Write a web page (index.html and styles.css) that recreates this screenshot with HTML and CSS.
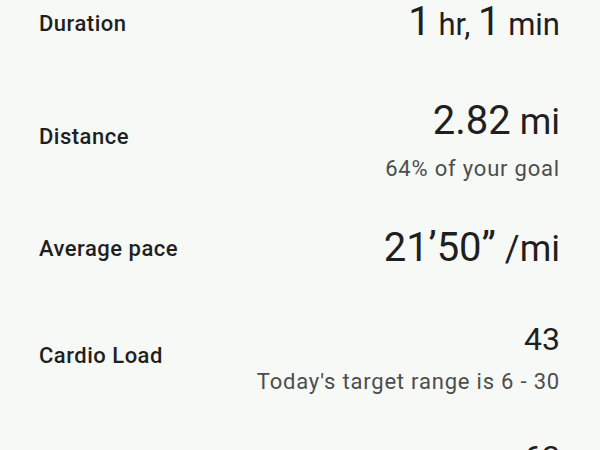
FILE: index.html
```html
<!DOCTYPE html>
<html lang="en">
<head>
  <meta charset="UTF-8">
  <meta name="viewport" content="width=device-width, initial-scale=1.0">
  <title>Workout summary</title>
  <link rel="stylesheet" href="styles.css">
</head>
<body>
  <div class="stats">
    <div class="stat-row">
      <div class="stat-label">Duration</div>
      <div class="stat-values">
        <div class="stat-value stat-value-time"><span class="num">1</span> hr, <span class="num">1</span> min</div>
      </div>
    </div>

    <div class="stat-row has-sub">
      <div class="stat-label">Distance</div>
      <div class="stat-values">
        <div class="stat-value"><span class="num">2.82</span> mi</div>
        <div class="stat-sub">64% of your goal</div>
      </div>
    </div>

    <div class="stat-row">
      <div class="stat-label">Average pace</div>
      <div class="stat-values">
        <div class="stat-value"><span class="num">21’50”</span> /mi</div>
      </div>
    </div>

    <div class="stat-row has-sub">
      <div class="stat-label">Cardio Load</div>
      <div class="stat-values">
        <div class="stat-value stat-value-sm">43</div>
        <div class="stat-sub">Today's target range is 6 - 30</div>
      </div>
    </div>

    <div class="stat-row has-sub">
      <div class="stat-label">Average heart rate</div>
      <div class="stat-values">
        <div class="stat-value stat-value-sm">62</div>
        <div class="stat-sub">bpm</div>
      </div>
    </div>
  </div>
</body>
</html>
```

FILE: styles.css
```css
:root {
  --bg-color: #f7f9f7;
  --text: #1f1f1f;
  --text-muted: #4b4e4c;
}
body {
  font-family: Roboto, 'Noto Sans', sans-serif;
  background-color: var(--bg-color);
  color: var(--text);
  margin: 0;
  overflow: hidden;
}
.stats {
  margin-top: -26px;
  padding: 0 40px 0 39px;
}
.stat-row {
  display: flex;
  justify-content: space-between;
  align-items: center;
  padding: 19px 0;
}
.stat-row:first-child {
  padding-top: 20px;
}
.stat-label {
  font-size: 22px;
  font-weight: 500;
  letter-spacing: 0.5px;
}
.stat-values {
  text-align: right;
}
.has-sub .stat-values {
  padding-top: 2px;
}
.stat-value {
  font-size: 36px;
  line-height: 56px;
  white-space: nowrap;
}
.stat-value .num {
  font-size: 40px;
}
.stat-value-time {
  font-size: 31px;
}
.stat-value-sm {
  font-size: 32px;
  line-height: 44px;
}
.stat-sub {
  font-size: 22px;
  line-height: 26px;
  letter-spacing: 0.8px;
  color: var(--text-muted);
  margin-top: 6px;
}
.stat-value-sm + .stat-sub {
  margin-top: 8px;
}
```
